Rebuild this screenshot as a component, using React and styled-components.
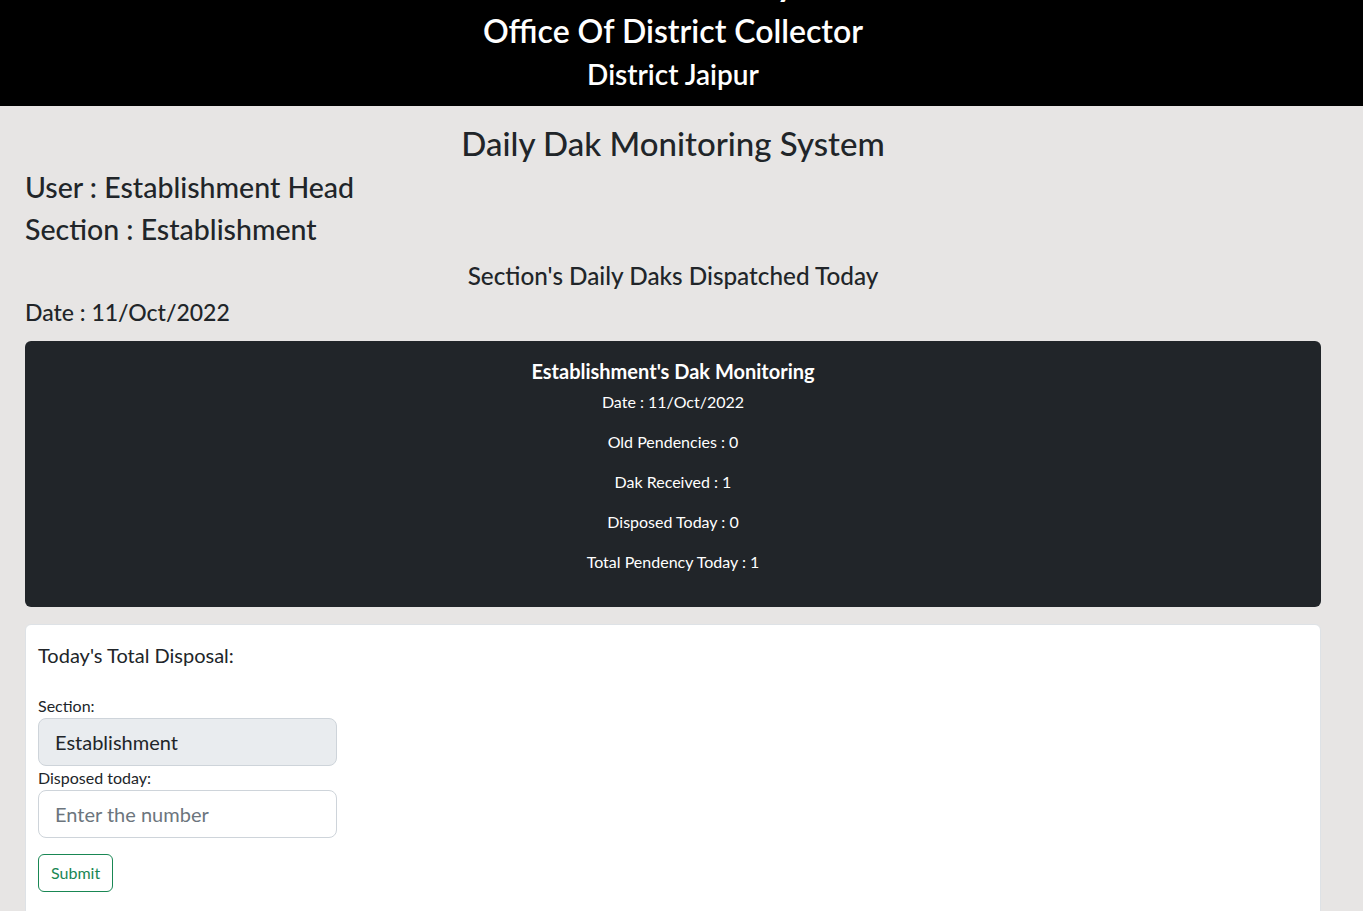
import React from "react";
import styled, { createGlobalStyle } from "styled-components";

const Global = createGlobalStyle`
  html, body { margin: 0; padding: 0; }
  body {
    background: #e7e5e4;
    color: #212529;
    font-family: "Segoe UI", Lato, "Noto Sans", sans-serif;
    font-size: 16px;
    line-height: 1.5;
  }
  * { box-sizing: border-box; }
`;

const Header = styled.header`
  background: #000;
  color: #fff;
  text-align: center;
  padding: 0 17px 6px 0;
  overflow: hidden;
`;

const HeaderLine = styled.div`
  font-size: ${(p) => p.$size}px;
  line-height: 1.2;
  font-weight: 600;
  margin: ${(p) => (p.$hidden ? "-44px 0 8px" : "0 0 8px")};
`;

const Main = styled.main`
  padding: 18px 42px 0 25px;
`;

const Heading = styled.div`
  font-size: ${(p) => p.$size}px;
  line-height: ${(p) => p.$lh || 1.2};
  font-weight: 500;
  text-align: ${(p) => (p.$center ? "center" : "left")};
  margin: ${(p) => p.$m || "0 0 8px"};
`;

const DarkCard = styled.section`
  background: #212529;
  color: #fff;
  border-radius: 6px;
  padding: 18px 16px 17px;
  text-align: center;
  margin-top: 14px;
`;

const DarkTitle = styled.div`
  font-size: 20px;
  line-height: 24px;
  font-weight: 700;
  margin-bottom: 7px;
`;

const Stat = styled.p`
  margin: 0 0 16px;
  font-size: 16px;
  line-height: 24px;
`;

const FormCard = styled.section`
  background: #fff;
  border: 1px solid #dee2e6;
  border-radius: 6px;
  margin-top: 17px;
  padding: 15px 12px 24px;
  min-height: 300px;
`;

const FormTitle = styled.div`
  font-size: 20px;
  line-height: 30px;
  margin: 0 0 24px;
`;

const Label = styled.label`
  display: block;
  font-size: 16px;
  line-height: 24px;
`;

const Input = styled.input`
  display: block;
  width: 299px;
  height: 48px;
  padding: 8px 16px;
  font-family: inherit;
  font-size: 20px;
  line-height: 30px;
  color: #212529;
  background: ${(p) => (p.disabled ? "#e9ecef" : "#fff")};
  border: 1px solid #ced4da;
  border-radius: 8px;
  outline: none;
  &::placeholder { color: #6c757d; }
`;

const Button = styled.button`
  display: inline-block;
  margin-top: 16px;
  height: 38px;
  padding: 6px 12px;
  font-family: inherit;
  font-size: 16px;
  line-height: 24px;
  color: #198754;
  background: transparent;
  border: 1px solid #198754;
  border-radius: 6px;
  cursor: pointer;
`;

export default function App() {
  return (
    <>
      <Global />
      <Header>
        <HeaderLine $size={40} $hidden>Dak Summary</HeaderLine>
        <HeaderLine $size={32}>Office Of District Collector</HeaderLine>
        <HeaderLine $size={28}>District Jaipur</HeaderLine>
      </Header>
      <Main>
        <Heading $size={33} $lh="38px" $center>Daily Dak Monitoring System</Heading>
        <Heading $size={28.5} $lh="34px">User : Establishment Head</Heading>
        <Heading $size={28.5} $lh="34px">Section : Establishment</Heading>
        <Heading $size={24.3} $lh="29px" $center $m="15px 0 8px">Section's Daily Daks Dispatched Today</Heading>
        <Heading $size={23} $lh="29px">Date : 11/Oct/2022</Heading>
        <DarkCard>
          <DarkTitle>Establishment's Dak Monitoring</DarkTitle>
          <Stat>Date : 11/Oct/2022</Stat>
          <Stat>Old Pendencies : 0</Stat>
          <Stat>Dak Received : 1</Stat>
          <Stat>Disposed Today : 0</Stat>
          <Stat>Total Pendency Today : 1</Stat>
        </DarkCard>
        <FormCard>
          <FormTitle>Today's Total Disposal:</FormTitle>
          <Label htmlFor="sec">Section:</Label>
          <Input id="sec" disabled defaultValue="Establishment" />
          <Label htmlFor="num">Disposed today:</Label>
          <Input id="num" placeholder="Enter the number" />
          <Button>Submit</Button>
        </FormCard>
      </Main>
    </>
  );
}
